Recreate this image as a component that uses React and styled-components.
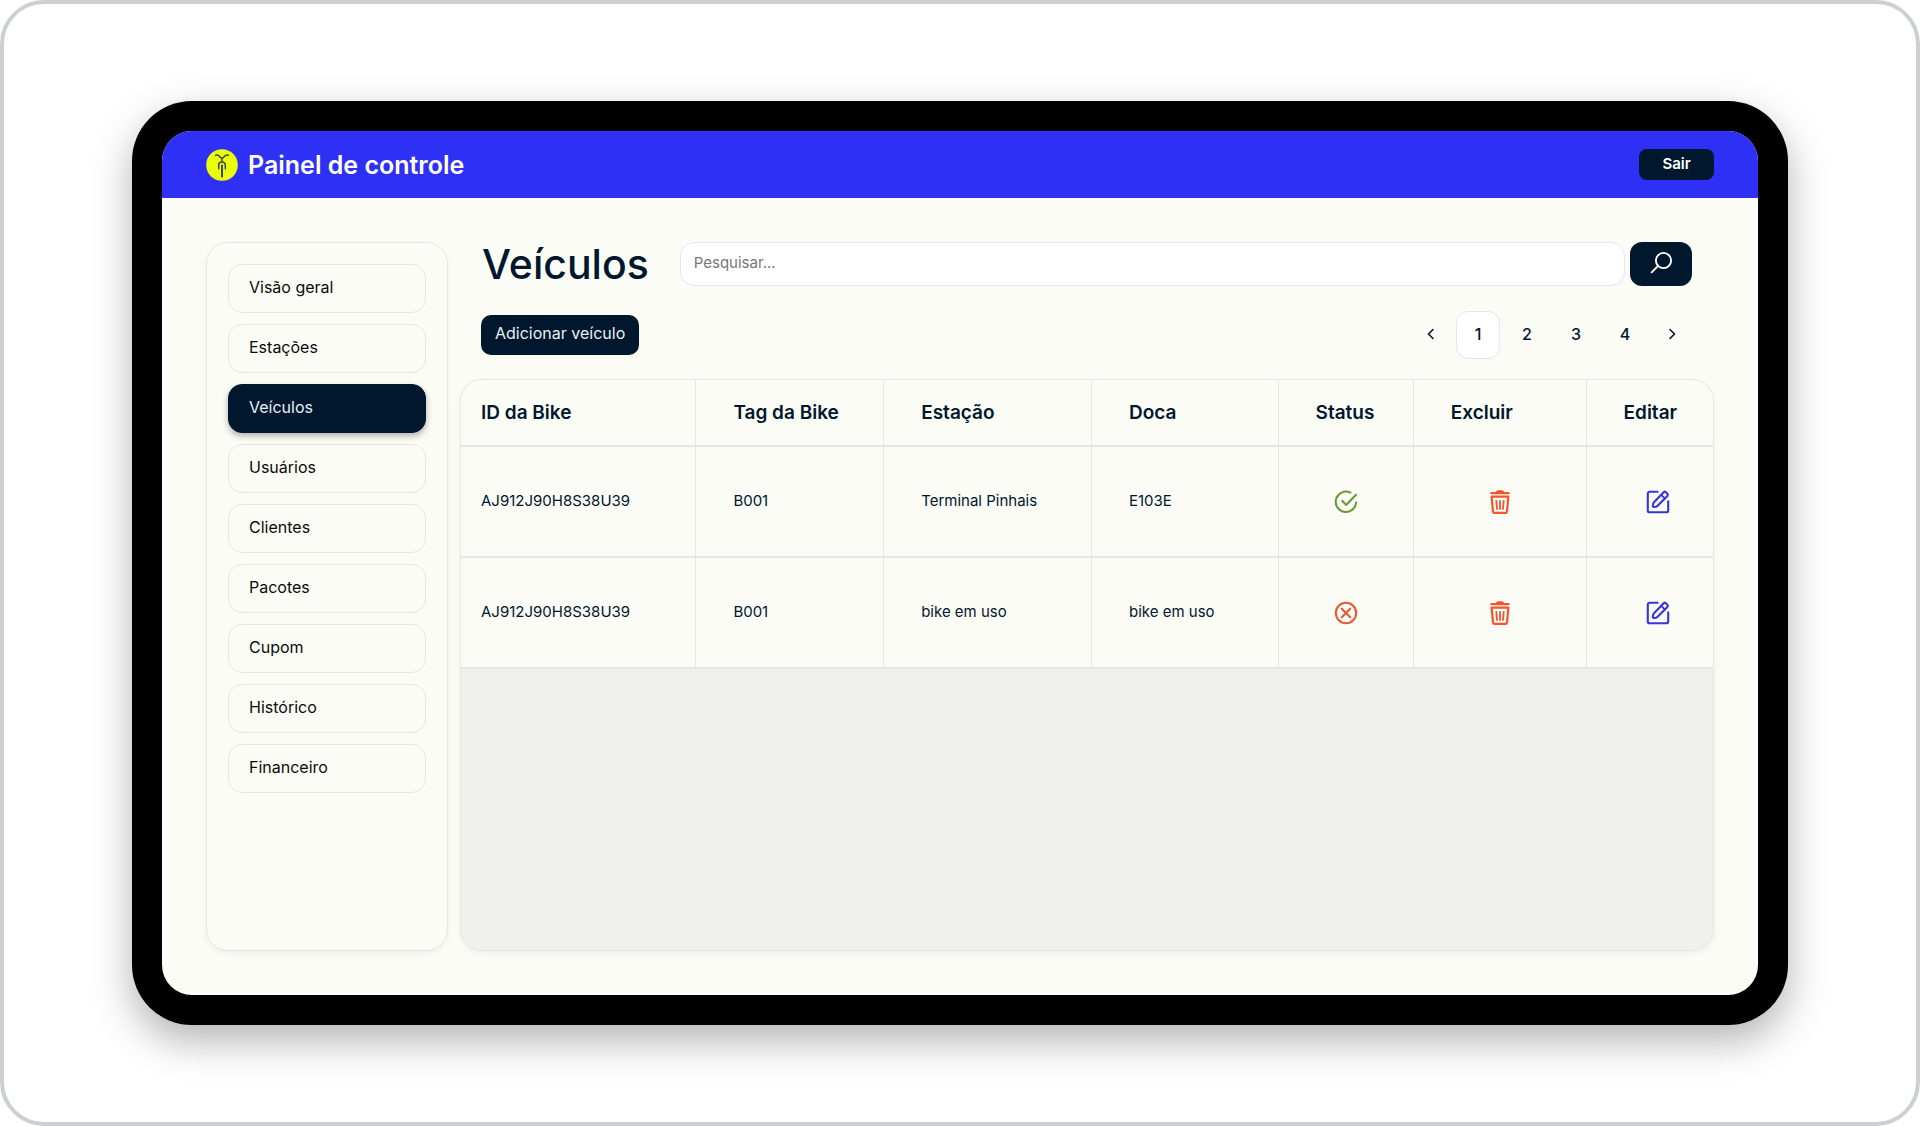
import styled, { createGlobalStyle } from 'styled-components';

const navy = '#00172d';
const cream = '#fbfcf6';
const line = '#e5e7e6';

const GlobalStyle = createGlobalStyle`
  * {
    box-sizing: border-box;
  }
  body {
    margin: 0;
    background: #fff;
    color: ${navy};
    font-family: "Inter", sans-serif;
    font-size: 16px;
  }
  button, input {
    font: inherit;
    color: inherit;
  }
`;

const Stage = styled.div`
  min-height: 100vh;
  display: flex;
  padding: 97px 128px;
  border: 4px solid #cdd0d3;
  border-radius: 44px;
`;

const Device = styled.div`
  flex: 1;
  display: flex;
  padding: 30px;
  border-radius: 60px;
  background: #000;
  box-shadow: 0 16px 40px rgba(0, 0, 0, 0.3);
`;

const Screen = styled.div`
  flex: 1;
  display: flex;
  flex-direction: column;
  border-radius: 30px;
  overflow: hidden;
  background: ${cream};
`;

const Header = styled.header`
  height: 67px;
  display: flex;
  align-items: center;
  gap: 10px;
  padding: 0 44px;
  background: #2f30f5;
  color: #fff;
`;

const Brand = styled.p`
  flex: 1;
  margin: 0;
  font-size: 25px;
  line-height: 32px;
  font-weight: 600;
`;

const LogoutButton = styled.button`
  width: 75px;
  height: 31px;
  padding: 0 0 2px;
  border: 0;
  border-radius: 8px;
  background: ${navy};
  color: #fff;
  font-size: 15px;
  font-weight: 600;
`;

const Body = styled.div`
  flex: 1;
  display: flex;
  gap: 12px;
  padding: 44px;
`;

const Sidebar = styled.nav`
  width: 242px;
  padding: 21px;
  border: 1px solid ${line};
  border-radius: 22px;
  box-shadow: 0 3px 6px rgba(0, 0, 0, 0.05);
`;

const Menu = styled.ul`
  display: flex;
  flex-direction: column;
  gap: 11px;
  margin: 0;
  padding: 0;
  list-style: none;
`;

const MenuLink = styled.a`
  display: block;
  height: 49px;
  padding: 10px 20px;
  border: 1px solid ${p => p.$active ? navy : line};
  border-radius: 14px;
  background: ${p => p.$active ? navy : 'transparent'};
  color: ${p => p.$active ? '#e6f1f5' : '#0b0b0b'};
  box-shadow: ${p => p.$active ? '0 3px 6px rgba(0, 0, 0, 0.3)' : 'none'};
  line-height: 24px;
  text-decoration: none;
`;

const Main = styled.main`
  flex: 1;
  display: flex;
  flex-direction: column;
  min-width: 0;
`;

const TopBar = styled.div`
  display: flex;
  align-items: center;
  padding: 0 22px;
`;

const Title = styled.h1`
  margin: 0 31px 0 0;
  font-size: 41px;
  line-height: 44px;
  font-weight: 500;
`;

const SearchForm = styled.form`
  flex: 1;
  display: flex;
  gap: 5px;
`;

const SearchInput = styled.input`
  flex: 1;
  min-width: 0;
  height: 44px;
  padding: 0 13px 4px;
  border: 1px solid ${line};
  border-radius: 14px;
  background: #fff;
  outline: none;
  font-size: 15px;
  &::placeholder {
    color: #777;
    opacity: 1;
  }
`;

const SearchButton = styled.button`
  width: 62px;
  height: 44px;
  display: grid;
  place-items: center;
  padding: 0 0 2px;
  border: 0;
  border-radius: 12px;
  background: ${navy};
  color: #fff;
`;

const Toolbar = styled.div`
  display: flex;
  align-items: center;
  justify-content: space-between;
  margin: 25px 22px 20px 21px;
`;

const AddButton = styled.button`
  height: 40px;
  padding: 0 14px 4px;
  border: 0;
  border-radius: 10px;
  background: ${navy};
  color: #e6f1f5;
`;

const Pagination = styled.nav`
  display: flex;
  gap: 5px;
`;

const PageButton = styled.button`
  width: ${p => p.$arrow ? '40px' : '44px'};
  height: 48px;
  display: grid;
  place-items: center;
  padding: 0 0 2px;
  border: 1px solid ${p => p.$active ? line : 'transparent'};
  border-radius: 12px;
  background: ${p => p.$active ? '#fff' : 'transparent'};
  font-weight: 500;
`;

const TablePanel = styled.div`
  flex: 1;
  border: 1px solid ${line};
  border-radius: 22px;
  overflow: hidden;
  background: #f0f1ec;
  box-shadow: 0 3px 6px rgba(0, 0, 0, 0.05);
`;

const Table = styled.table`
  width: 100%;
  table-layout: fixed;
  border-collapse: separate;
  border-spacing: 0;
  background: ${cream};
`;

const HeadCell = styled.th`
  width: ${p => p.$width};
  height: 67px;
  padding: 0 0 0 ${p => p.$first ? '20px' : '37px'};
  border-right: 1px solid ${line};
  border-bottom: 2px solid ${line};
  font-size: 19px;
  font-weight: 600;
  text-align: left;
  white-space: nowrap;
  &:last-child {
    border-right: 0;
  }
`;

const Cell = styled.td`
  height: 111px;
  padding: 0 0 2px ${p => p.$first ? '20px' : '37px'};
  border-right: 1px solid ${line};
  border-bottom: 2px solid ${line};
  font-size: 15px;
  white-space: nowrap;
`;

const IconCell = styled(Cell)`
  padding: 0 0 0 ${p => p.$shift ? '16px' : '0'};
  text-align: center;
  &:last-child {
    border-right: 0;
  }
`;

const IconButton = styled.button`
  display: inline-grid;
  vertical-align: middle;
  padding: 0;
  border: 0;
  background: none;
  color: ${p => p.$color};
`;

const Icon = styled.svg`
  display: inline-block;
  vertical-align: middle;
  fill: none;
  stroke: ${p => p.$color || 'currentColor'};
  stroke-linecap: round;
  stroke-linejoin: round;
`;

const Logo = () => (
  <svg width="32" height="32" viewBox="0 0 32 32" aria-hidden="true">
    <circle cx="16" cy="16" r="15.8" fill="#eaff0a" />
    <g fill="none" stroke="#3c4450" strokeWidth="1.5" strokeLinecap="round" strokeLinejoin="round">
      <path d="M9.6 6.2c2.4-.5 3.4.4 4.3 1.6.9 1.1 1.5 1.5 2.1 1.5s1.200-.4 2.100-1.500c.9-1.200 1.900-2.100 4.300-1.600" />
      <path d="M16 9.400v3" />
      <path d="M12.700 19.800v-3.600a3.300 3.300 0 0 1 6.600 0v3.600" />
      <path d="M16 16.400v11" strokeWidth="2" />
    </g>
  </svg>
);

const SearchIcon = () => (
  <Icon width="24" height="24" viewBox="0 0 24 24" strokeWidth="1.9" aria-hidden="true">
    <circle cx="14.5" cy="9.5" r="7.6" />
    <path d="m9 15-6.4 6.4" />
  </Icon>
);

const ChevronIcon = ({ left }) => (
  <Icon width="12" height="12" viewBox="0 0 12 12" strokeWidth="1.6" aria-hidden="true">
    <path d={left ? 'M8 1.500 3.500 6 8 10.500' : 'M4 1.500 8.500 6 4 10.500'} />
  </Icon>
);

const CheckIcon = () => (
  <Icon $color="#6b9a34" width="26" height="26" viewBox="0 0 26 26" strokeWidth="2.1" role="img" aria-label="Disponível">
    <path d="M17.4 3.6A10.2 10.2 0 1 0 23.1 13.6" />
    <path d="m9.2 11.8 4 4.2L23 5.8" />
  </Icon>
);

const CrossIcon = () => (
  <Icon $color="#ee5532" width="26" height="26" viewBox="0 0 26 26" strokeWidth="2.1" role="img" aria-label="Indisponível">
    <circle cx="13" cy="13" r="10.2" />
    <path d="m8.8 8.8 8.4 8.4M17.2 8.8l-8.4 8.4" />
  </Icon>
);

const TrashIcon = () => (
  <Icon width="26" height="26" viewBox="0 0 26 26" strokeWidth="2.2" aria-hidden="true">
    <path d="M4.300 4.200h17.400" />
    <path d="M8.600 4c.6-1.600 1.600-2.200 2.800-2.200h3.200c1.200 0 2.200.6 2.800 2.200z" fill="currentColor" strokeWidth="1" />
    <path d="M4.600 7.700h16.800l-1.400 14.900c-.1.9-.6 1.300-1.400 1.300H7.400c-.8 0-1.300-.4-1.400-1.300z" />
    <path d="m9.300 12 .7 8M13 12v8M16.700 12l-.7 8" strokeWidth="1.800" />
  </Icon>
);

const EditIcon = () => (
  <Icon width="26" height="26" viewBox="0 0 26 26" strokeWidth="2.1" aria-hidden="true">
    <path d="M12.600 2.800H4.600a1.800 1.800 0 0 0-1.800 1.800v16.800c0 1 .8 1.800 1.800 1.800h16.800c1 0 1.800-.8 1.800-1.800v-9" />
    <path d="M18.700 3.200a1.500 1.500 0 0 1 2.100 0l1.600 1.600a1.500 1.500 0 0 1 0 2.100L12.600 16.800c-.9.900-2.200 1.200-3.800 1.200-.6 0-1-.4-1-1 0-1.600.3-2.900 1.200-3.800z" />
    <path d="m16.200 5.800 3.800 3.800" strokeWidth="1.800" />
  </Icon>
);

const menuItems = ['Visão geral', 'Estações', 'Veículos', 'Usuários', 'Clientes', 'Pacotes', 'Cupom', 'Histórico', 'Financeiro'];

const columns = [
  { label: 'ID da Bike', width: '18.8%' },
  { label: 'Tag da Bike', width: '15%' },
  { label: 'Estação', width: '16.6%' },
  { label: 'Doca', width: '14.9%' },
  { label: 'Status', width: '10.8%' },
  { label: 'Excluir', width: '13.8%' },
  { label: 'Editar', width: '10.1%' },
];

const bikes = [
  { key: 1, id: 'AJ912J90H8S38U39', tag: 'B001', station: 'Terminal Pinhais', dock: 'E103E', available: true },
  { key: 2, id: 'AJ912J90H8S38U39', tag: 'B001', station: 'bike em uso', dock: 'bike em uso', available: false },
];

const App = () => {
  return (
    <>
      <GlobalStyle />
      <Stage>
        <Device>
          <Screen>
            <Header>
              <Logo />
              <Brand>Painel de controle</Brand>
              <LogoutButton type="button">Sair</LogoutButton>
            </Header>

            <Body>
              <Sidebar aria-label="Menu">
                <Menu>
                  {menuItems.map(item => (
                    <li key={item}>
                      <MenuLink href="#" $active={item === 'Veículos'}>{item}</MenuLink>
                    </li>
                  ))}
                </Menu>
              </Sidebar>

              <Main>
                <TopBar>
                  <Title>Veículos</Title>
                  <SearchForm role="search" onSubmit={e => e.preventDefault()}>
                    <SearchInput type="text" placeholder="Pesquisar..." aria-label="Pesquisar" />
                    <SearchButton type="submit" aria-label="Pesquisar"><SearchIcon /></SearchButton>
                  </SearchForm>
                </TopBar>

                <Toolbar>
                  <AddButton type="button">Adicionar veículo</AddButton>
                  <Pagination aria-label="Paginação">
                    <PageButton type="button" $arrow aria-label="Anterior"><ChevronIcon left /></PageButton>
                    {[1, 2, 3, 4].map(page => (
                      <PageButton key={page} type="button" $active={page === 1}>{page}</PageButton>
                    ))}
                    <PageButton type="button" $arrow aria-label="Próxima"><ChevronIcon /></PageButton>
                  </Pagination>
                </Toolbar>

                <TablePanel>
                  <Table>
                    <thead>
                      <tr>
                        {columns.map((col, i) => (
                          <HeadCell key={col.label} $width={col.width} $first={i === 0}>{col.label}</HeadCell>
                        ))}
                      </tr>
                    </thead>
                    <tbody>
                      {bikes.map(bike => (
                        <tr key={bike.key}>
                          <Cell $first>{bike.id}</Cell>
                          <Cell>{bike.tag}</Cell>
                          <Cell>{bike.station}</Cell>
                          <Cell>{bike.dock}</Cell>
                          <IconCell>{bike.available ? <CheckIcon /> : <CrossIcon />}</IconCell>
                          <IconCell>
                            <IconButton type="button" $color="#f4532f" aria-label="Excluir"><TrashIcon /></IconButton>
                          </IconCell>
                          <IconCell $shift>
                            <IconButton type="button" $color="#3434e0" aria-label="Editar"><EditIcon /></IconButton>
                          </IconCell>
                        </tr>
                      ))}
                    </tbody>
                  </Table>
                </TablePanel>
              </Main>
            </Body>
          </Screen>
        </Device>
      </Stage>
    </>
  );
};

export default App;
